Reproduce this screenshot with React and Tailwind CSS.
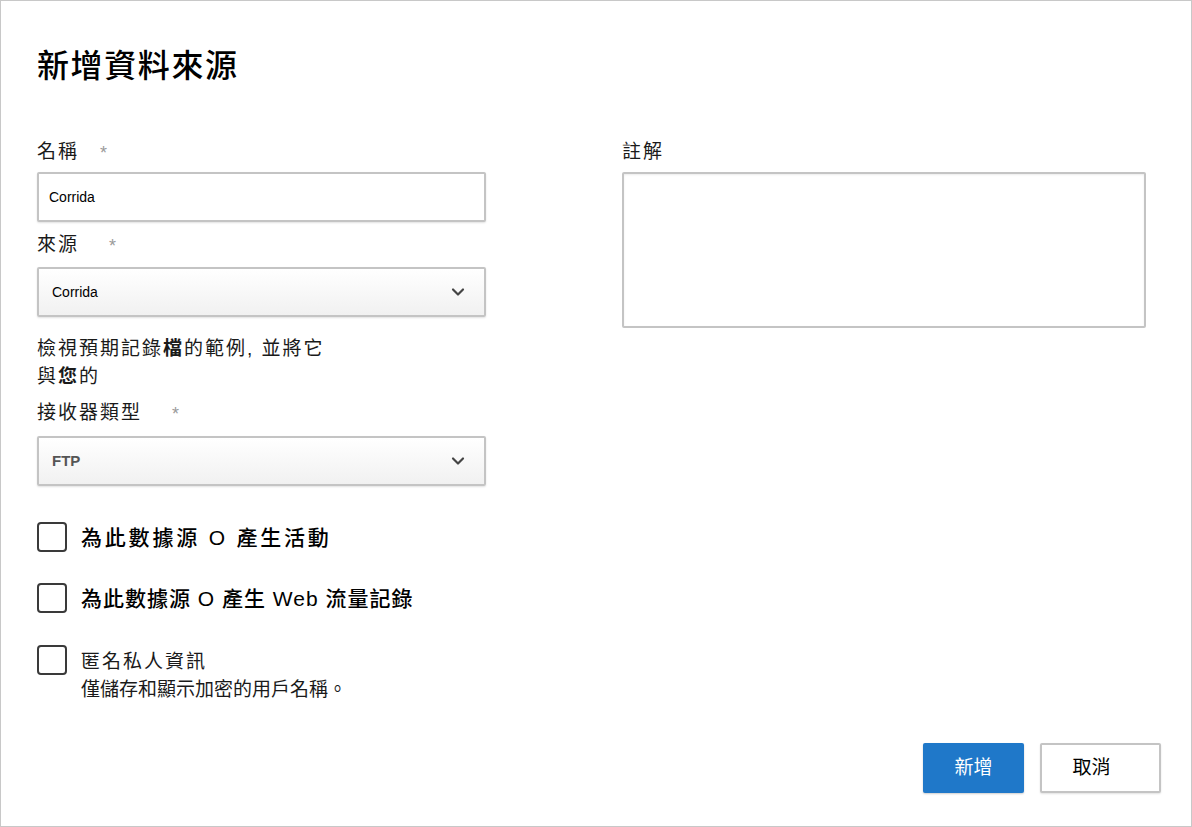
import { ChevronDown } from 'lucide-react'

const font = { fontFamily: '"Liberation Sans", "Noto Sans CJK TC", sans-serif' }

function Label({ text, starGap }) {
  return (
    <div className="flex h-6 items-center text-[19px] leading-6 tracking-[2px] text-[#1a1a1a]">
      <span>{text}</span>
      <span className={`${starGap} pt-[2px] text-[18px] text-[#9a9a9a]`}>*</span>
    </div>
  )
}

function Select({ value, className }) {
  return (
    <div className="flex h-[50px] items-center justify-between rounded-[2px] border-2 border-[#c4c4c4] bg-gradient-to-b from-white to-[#f1f1f1] pr-4 pl-[13px] shadow-[0_1px_2px_rgba(0,0,0,0.12)]">
      <span className={className}>{value}</span>
      <ChevronDown size={20} strokeWidth={2.6} className="text-[#444]" />
    </div>
  )
}

function Check({ children, className }) {
  return (
    <div className={`flex items-start gap-[14px] ${className}`}>
      <div className="h-[30px] w-[30px] shrink-0 rounded-[4px] border-2 border-[#3a3a3a] bg-white" />
      {children}
    </div>
  )
}

export default function App() {
  return (
    <div style={font} className="flex h-[827px] w-[1192px] flex-col border border-[#c8c8c8] bg-white pl-[36px] text-[#111]">
      <h1 className="mt-[45px] text-[32px] leading-[40px] font-medium tracking-[1.6px] text-black">新增資料來源</h1>

      <div className="mt-[54px] grid grid-cols-[449px_524px] gap-x-[136px]">
        <div className="flex flex-col">
          <Label text="名稱" starGap="ml-[21px]" />
          <div className="mt-[8px] flex h-[50px] items-center rounded-[2px] border-2 border-[#c4c4c4] bg-white px-[10px] text-[14px] text-black shadow-[0_1px_2px_rgba(0,0,0,0.12)]">
            Corrida
          </div>

          <div className="mt-[11px]">
            <Label text="來源" starGap="ml-[30px]" />
          </div>
          <div className="mt-[10px]">
            <Select value="Corrida" className="text-[14px] text-black" />
          </div>

          <p className="mt-[18px] text-[19px] leading-[28px] tracking-[2px] text-[#1a1a1a]">
            檢視預期記錄<b>檔</b>的範例, 並將它
            <br />
            與<b>您</b>的
          </p>

          <div className="mt-[10px]">
            <Label text="接收器類型" starGap="ml-[30px]" />
          </div>
          <div className="mt-[11px]">
            <Select value="FTP" className="text-[15px] font-semibold text-[#555]" />
          </div>

          <Check className="mt-[36px]">
            <span className="pt-[1px] text-[21px] leading-[30px] font-medium tracking-[2.8px] text-black">為此數據源 O 產生活動</span>
          </Check>
          <Check className="mt-[30px]">
            <span className="pt-[1px] text-[21px] leading-[30px] font-medium tracking-[1px] text-black">為此數據源 O 產生 Web 流量記錄</span>
          </Check>
          <Check className="mt-[31px]">
            <div className="pt-[3px] text-[19px] leading-[28px] text-[#1a1a1a]">
              <div className="tracking-[2px]">匿名私人資訊</div>
              <div>僅儲存和顯示加密的用戶名稱。</div>
            </div>
          </Check>
        </div>

        <div className="flex flex-col">
          <div className="flex h-6 items-center text-[19px] leading-6 tracking-[2px] text-[#1a1a1a]">註解</div>
          <div className="mt-[8px] h-[156px] rounded-[2px] border-2 border-[#c4c4c4] bg-white shadow-[inset_0_1px_2px_rgba(0,0,0,0.08)]" />
        </div>
      </div>

      <div className="mt-auto mb-[33px] flex justify-end gap-4 pr-[30px]">
        <button type="button" className="h-[50px] w-[101px] rounded-[2px] bg-[#1f78c9] text-[19px] font-normal text-white shadow-[0_1px_2px_rgba(0,0,0,0.2)]">
          新增
        </button>
        <button type="button" className="h-[50px] w-[121px] rounded-[2px] border-2 border-[#c4c4c4] bg-white pr-[18px] text-[19px] font-normal text-black shadow-[0_1px_2px_rgba(0,0,0,0.12)]">
          取消
        </button>
      </div>
    </div>
  )
}
